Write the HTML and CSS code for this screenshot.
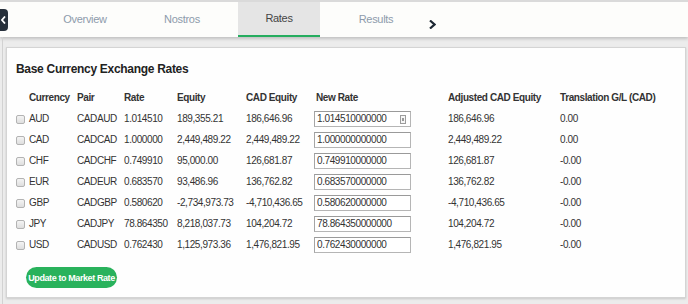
FILE: index.html
```html
<!DOCTYPE html>
<html lang="en">
<head>
    <meta charset="UTF-8">
    <title>Base Currency Exchange Rates</title>
    <link rel="stylesheet" href="styles.css">
</head>
<body>
    <!-- top navigation -->
    <div class="topbar">
        <div class="back">
            <svg width="5" height="8" viewBox="0 0 5 8"><path d="M4 0.5 L1 4 L4 7.5" fill="none" stroke="#fff" stroke-width="1.8"/></svg>
        </div>
        <div class="tabs">
            <a class="tab">Overview</a>
            <a class="tab">Nostros</a>
            <a class="tab active">Rates</a>
            <a class="tab">Results</a>
        </div>
        <div class="next">
            <svg width="7" height="9" viewBox="0 0 7 9"><path d="M1 0.5 L5.5 4.5 L1 8.5" fill="none" stroke="#1d2733" stroke-width="2.2"/></svg>
        </div>
    </div>

    <div class="content">
        <div class="card">
            <h3>Base Currency Exchange Rates</h3>
            <table class="rates">
                <thead>
                    <tr>
                        <th class="chk"></th>
                        <th class="c-cur">Currency</th>
                        <th class="c-pair">Pair</th>
                        <th class="c-rate">Rate</th>
                        <th class="c-eq">Equity</th>
                        <th class="c-cad">CAD Equity</th>
                        <th class="c-new">New Rate</th>
                        <th class="c-adj">Adjusted CAD Equity</th>
                        <th class="c-gl">Translation G/L (CAD)</th>
                    </tr>
                </thead>
                <tbody>
                    <tr>
                        <td class="chk"><input type="checkbox"></td>
                        <td>AUD</td><td>CADAUD</td><td>1.014510</td><td>189,355.21</td><td>186,646.96</td>
                        <td><span class="field"><input type="text" value="1.014510000000"><span class="spin"><i></i></span></span></td>
                        <td>186,646.96</td><td>0.00</td>
                    </tr>
                    <tr>
                        <td class="chk"><input type="checkbox"></td>
                        <td>CAD</td><td>CADCAD</td><td>1.000000</td><td>2,449,489.22</td><td>2,449,489.22</td>
                        <td><span class="field"><input type="text" value="1.000000000000"></span></td>
                        <td>2,449,489.22</td><td>0.00</td>
                    </tr>
                    <tr>
                        <td class="chk"><input type="checkbox"></td>
                        <td>CHF</td><td>CADCHF</td><td>0.749910</td><td>95,000.00</td><td>126,681.87</td>
                        <td><span class="field"><input type="text" value="0.749910000000"></span></td>
                        <td>126,681.87</td><td>-0.00</td>
                    </tr>
                    <tr>
                        <td class="chk"><input type="checkbox"></td>
                        <td>EUR</td><td>CADEUR</td><td>0.683570</td><td>93,486.96</td><td>136,762.82</td>
                        <td><span class="field"><input type="text" value="0.683570000000"></span></td>
                        <td>136,762.82</td><td>-0.00</td>
                    </tr>
                    <tr>
                        <td class="chk"><input type="checkbox"></td>
                        <td>GBP</td><td>CADGBP</td><td>0.580620</td><td>-2,734,973.73</td><td>-4,710,436.65</td>
                        <td><span class="field"><input type="text" value="0.580620000000"></span></td>
                        <td>-4,710,436.65</td><td>-0.00</td>
                    </tr>
                    <tr>
                        <td class="chk"><input type="checkbox"></td>
                        <td>JPY</td><td>CADJPY</td><td>78.864350</td><td>8,218,037.73</td><td>104,204.72</td>
                        <td><span class="field"><input type="text" value="78.864350000000"></span></td>
                        <td>104,204.72</td><td>-0.00</td>
                    </tr>
                    <tr>
                        <td class="chk"><input type="checkbox"></td>
                        <td>USD</td><td>CADUSD</td><td>0.762430</td><td>1,125,973.36</td><td>1,476,821.95</td>
                        <td><span class="field"><input type="text" value="0.762430000000"></span></td>
                        <td>1,476,821.95</td><td>-0.00</td>
                    </tr>
                </tbody>
            </table>
            <button class="update">Update to Market Rate</button>
        </div>
    </div>
</body>
</html>
```

FILE: styles.css
```css
body {
    font-family: "Liberation Sans", Arial, sans-serif;
    background: #ececec;
    margin: 0;
    padding: 0;
    color: #333;
}

/* top navigation */
.topbar {
    display: flex;
    height: 35px;
    border-top: 2px solid #dadada;
    background: #fdfdfb;
    box-shadow: 0 2px 3px rgba(0, 0, 0, 0.18);
}

.back {
    width: 8px;
    height: 22px;
    margin-top: 7px;
    background: #27303b;
    border-radius: 0 4px 4px 0;
    display: flex;
    align-items: center;
    padding-left: 1px;
    box-sizing: border-box;
}

.tabs {
    display: flex;
    margin-left: 36px;
    gap: 15px;
}

.tab {
    width: 82px;
    text-align: center;
    line-height: 35px;
    font-size: 11px;
    letter-spacing: -0.3px;
    color: #8d9bab;
}

.tab.active {
    background: #e5e5e5;
    color: #444;
    line-height: 33px;
    border-bottom: 2px solid #26ad5f;
}

.next {
    margin-left: 12px;
    padding-top: 13px;
}

/* content */
.content {
    border-left: 1px solid #d2d2d2;
    margin-left: 2px;
    padding: 10px 2px 6px 3px;
}

.card {
    background: #fefefe;
    border: 1px solid #d4d4d4;
    box-shadow: 0 1px 2px rgba(0, 0, 0, 0.15);
    height: 249px;
    padding: 0 9px;
}

.card h3 {
    margin: 14px 0 10px 0;
    font-size: 12px;
    line-height: 14px;
    font-weight: bold;
    letter-spacing: -0.3px;
    color: #222;
}

.rates {
    border-collapse: collapse;
    table-layout: fixed;
    width: 640px;
    font-size: 10px;
    letter-spacing: -0.4px;
}

.rates th, .rates td {
    padding: 0;
    height: 21px;
    text-align: left;
    white-space: nowrap;
    overflow: visible;
}

.rates th {
    font-weight: bold;
    height: 22px;
}

.rates .chk { width: 13px; }
.rates .c-cur { width: 48px; }
.rates .c-pair { width: 47px; }
.rates .c-rate { width: 53px; }
.rates .c-eq { width: 69px; }
.rates .c-cad { width: 68px; }
.rates .c-new { width: 132px; padding-left: 2px; }
.rates .c-adj { width: 112px; }
.rates .c-gl { width: 129px; }

.rates input[type="checkbox"] {
    appearance: none;
    -webkit-appearance: none;
    width: 9px;
    height: 9px;
    margin: 0;
    border: 1px solid #b3b3b3;
    border-radius: 2px;
    background: linear-gradient(#f4f4f4, #dedede);
    vertical-align: middle;
}

.field {
    position: relative;
    display: inline-block;
    vertical-align: middle;
}

.field input {
    width: 97px;
    height: 16px;
    box-sizing: border-box;
    border: 1px solid #b5b5b5;
    border-top-color: #9a9a9a;
    border-left-color: #a5a5a5;
    padding: 0 2px;
    font-family: inherit;
    font-size: 10px;
    letter-spacing: -0.4px;
    color: #333;
    background: #fff;
}

/* number spinner on the focused field */
.spin {
    position: absolute;
    right: 5px;
    top: 4px;
    width: 4px;
    height: 7px;
    border: 1px solid #9c9c9c;
    background: #f6f6f6;
    display: flex;
    justify-content: center;
    align-items: center;
}

.spin i {
    width: 2px;
    height: 3px;
    background: #999;
}

.update {
    margin-top: 12px;
    margin-left: 10px;
    width: 91px;
    height: 21px;
    background: #29b25c;
    color: #fff;
    border: none;
    border-radius: 11px;
    font-family: inherit;
    font-size: 9px;
    font-weight: bold;
    letter-spacing: -0.4px;
    white-space: nowrap;
    padding: 0;
}
```
